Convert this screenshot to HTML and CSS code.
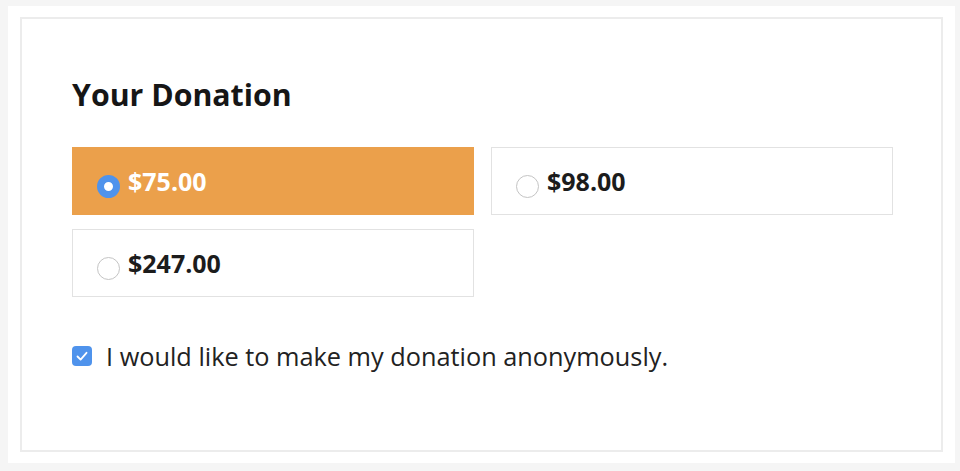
FILE: index.html
```html
<!DOCTYPE html>
<html lang="en">
<head>
    <meta charset="UTF-8">
    <meta name="viewport" content="width=device-width, initial-scale=1.0">
    <title>Your Donation</title>
    <link rel="stylesheet" href="styles.css">
</head>
<body>
    <div class="page">
        <form class="donation-box">
            <h2 class="title">Your Donation</h2>

            <div class="amounts">
                <label class="amount selected">
                    <span class="radio"></span>
                    <span class="amount-text">$75.00</span>
                </label>
                <label class="amount">
                    <span class="radio"></span>
                    <span class="amount-text">$98.00</span>
                </label>
                <label class="amount">
                    <span class="radio"></span>
                    <span class="amount-text">$247.00</span>
                </label>
            </div>

            <label class="anon">
                <span class="checkbox">
                    <svg viewBox="0 0 20 20" width="20" height="20">
                        <path d="M5.5 10.5 L8.6 13.6 L14.5 6.8" fill="none" stroke="#fff" stroke-width="1.8" stroke-linecap="round" stroke-linejoin="round"/>
                    </svg>
                </span>
                I would like to make my donation anonymously.
            </label>
        </form>
    </div>
</body>
</html>
```

FILE: styles.css
```css
html, body {
    margin: 0;
    padding: 0;
}
body {
    background: #f5f5f5;
    font-family: "Open Sans", Arial, sans-serif;
    color: #1c1c1c;
    padding: 6px 5px 8px 8px;
}
.page {
    background: #fff;
    padding: 11px 12px;
    height: 457px;
    box-sizing: border-box;
}
.donation-box {
    border: 2px solid #ececec;
    height: 100%;
    box-sizing: border-box;
    padding: 0 49px 0 50px;
}
.title {
    font-size: 30.3px;
    font-weight: 700;
    margin: 56px 0 0 0;
    line-height: 40px;
    color: #161616;
}
.amounts {
    display: grid;
    grid-template-columns: 402px 402px;
    column-gap: 17px;
    row-gap: 14px;
    margin-top: 32px;
}
.amount {
    height: 68px;
    box-sizing: border-box;
    border: 1px solid #e2e2e2;
    display: flex;
    align-items: center;
    padding-left: 24px;
    gap: 8px;
    cursor: pointer;
}
.amount.selected {
    background: #eba04b;
    border-color: #eba04b;
    color: #fff;
}
.radio {
    width: 23px;
    height: 23px;
    border-radius: 50%;
    border: 1px solid #c4c4c4;
    background: #fff;
    box-sizing: border-box;
    margin-top: 10px;
}
.selected .radio {
    background: #fff;
    border: 7px solid #4f93ec;
}
.amount-text {
    font-size: 25px;
    font-weight: 700;
}
.anon {
    display: flex;
    align-items: center;
    gap: 14px;
    margin-top: 42px;
    font-size: 25.3px;
    color: #222;
}
.checkbox {
    width: 20px;
    height: 20px;
    border-radius: 4px;
    background: #4f93ec;
    display: block;
}
.checkbox svg {
    display: block;
}
```
